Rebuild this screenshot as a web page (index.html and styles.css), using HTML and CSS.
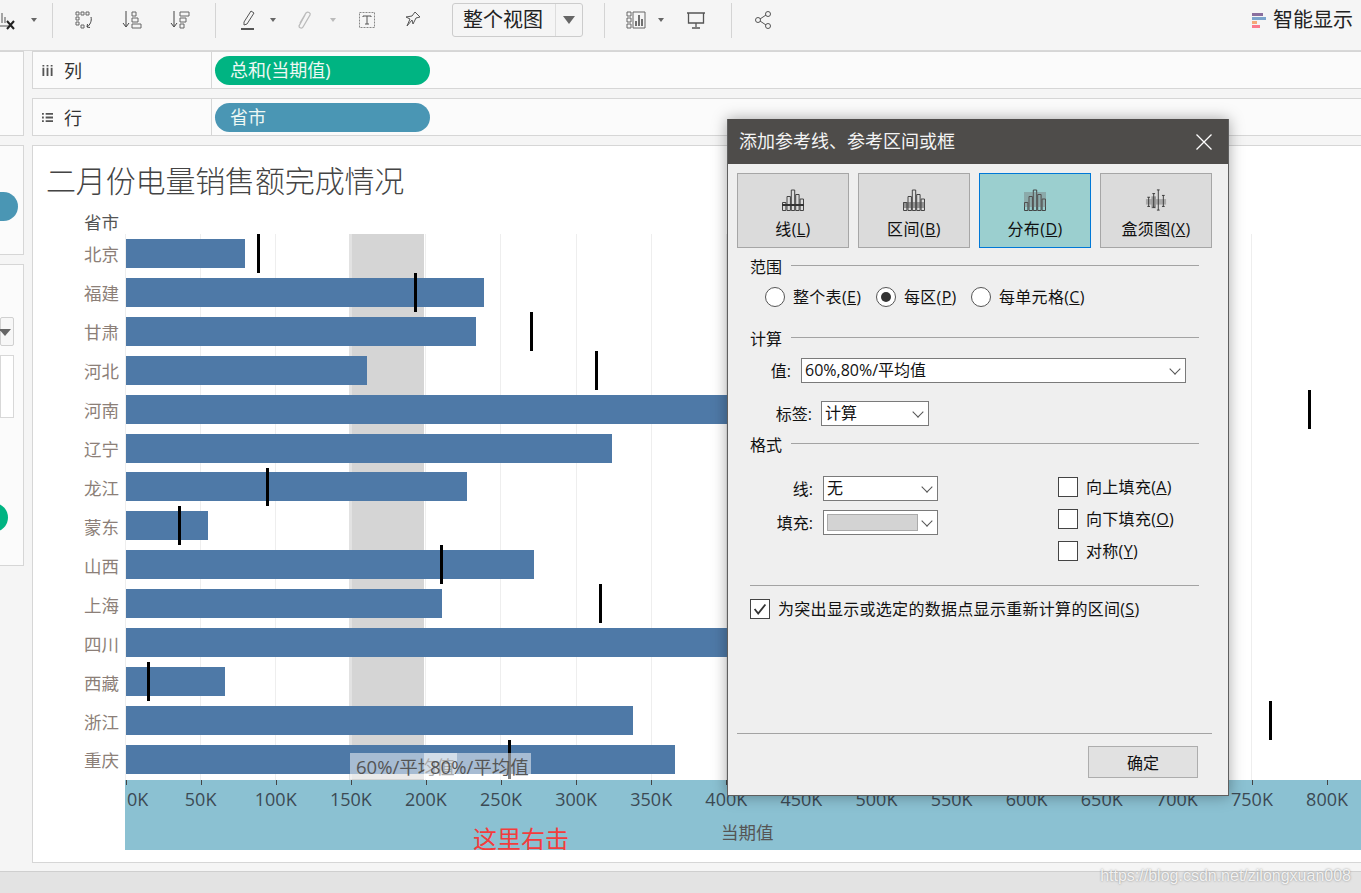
FILE: index.html
```html
<!DOCTYPE html>
<html lang="zh-CN">
<head>
  <meta charset="UTF-8" />
  <title>添加参考线、参考区间或框</title>
  <link rel="stylesheet" href="styles.css">
</head>
<body>
  <svg class="defs" width="0" height="0">
    <symbol id="bars" viewBox="0 0 22 22">
      <path d="M.5 13.5h3.4v8H.5zM5 7.500h3.400v14H5zM9.300 1h3.400v20.500H9.300zM13.700 5.500h3.400v16h-3.400zM18.100 10h3.400v11.500h-3.400z" fill="none" stroke="#444"/>
    </symbol>
  </svg>

  <div id="toolbar">
    <span class="tool t-first"><svg viewBox="0 0 20 20"><path d="M.5 0v16h13M3 13V9M6 13V3M9 13V7" fill="none" stroke="#555"/><path d="M11 11l7 8m0-8l-7 8" stroke="#222" stroke-width="2"/></svg></span>
    <span class="caret c-first"></span>
    <span class="sep"></span>
    <span class="tool t-wide t-swap"><svg viewBox="0 0 20 20"><path d="M2 2h3v3H2zM7 2h3v3H7zM12 2h3v3h-3zM2 7h3v3H2zM2 12h3v3H2zM7 15h3v3H7z" fill="none" stroke="#666"/><path d="M17 7c1 4-1 8-4 10m0 0l3 .5M13 17l.5-3" fill="none" stroke="#444"/></svg></span>
    <span class="tool t-wide"><svg viewBox="0 0 20 20"><path d="M4 1v15m-3-3l3 4 3-4" fill="none" stroke="#444"/><path d="M10 2h4v4h-4zM10 8h6v4h-6zM10 14h9v4h-9z" fill="none" stroke="#666"/></svg></span>
    <span class="tool t-wide"><svg viewBox="0 0 20 20"><path d="M4 1v15m-3-3l3 4 3-4" fill="none" stroke="#444"/><path d="M10 2h9v4h-9zM10 8h6v4h-6zM10 14h4v4h-4z" fill="none" stroke="#666"/></svg></span>
    <span class="sep s-second"></span>
    <span class="tool t-pen"><svg viewBox="0 0 20 20"><path d="M6 12L13 1l3 2-7 11-3 1z" fill="none" stroke="#555"/><path d="M3 19h13" stroke="#555" stroke-width="2"/></svg></span>
    <span class="caret"></span>
    <span class="tool t-clip"><svg viewBox="0 0 20 20"><path d="M6 13l6-10c2-2 5 0 4 2l-7 12c-1 2-4 1-4-1l6-11" fill="none" stroke="#bbb" stroke-width="1.300"/></svg></span>
    <span class="caret caret-off"></span>
    <span class="tool t-text"><svg viewBox="0 0 20 20"><path d="M2.500 2.500h15v15h-15z" fill="none" stroke="#888" stroke-dasharray="2 1"/><path d="M6 7V6h8v1M10 6v8M8 14h4" fill="none" stroke="#555"/></svg></span>
    <span class="tool t-pin"><svg viewBox="0 0 20 20"><path d="M12 2l5 5-4 1-3 6-1-4-5 6 3-7-4-2 6-1z" fill="none" stroke="#555"/></svg></span>
    <div class="fit-select">
      <span class="fit-text">整个视图</span>
      <span class="fit-arrow"></span>
    </div>
    <span class="sep s-third"></span>
    <span class="tool t-show"><svg viewBox="0 0 20 20"><path d="M1 2h4v4H1zM1 8h4v4H1zM1 14h4v4H1zM7 2h12v16H7z" fill="none" stroke="#666"/><path d="M10 16v-5M13 16V5M16 16V9" stroke="#444" stroke-width="1.500"/></svg></span>
    <span class="caret"></span>
    <span class="tool t-board"><svg viewBox="0 0 20 20"><path d="M1 3h18M2.500 3v10h15V3M10 13v4M6 18h8" fill="none" stroke="#555" stroke-width="1.300"/></svg></span>
    <span class="sep s-fourth"></span>
    <span class="tool t-share"><svg viewBox="0 0 20 20"><circle cx="15" cy="4" r="2.500" fill="none" stroke="#555"/><circle cx="5" cy="10" r="2.500" fill="none" stroke="#555"/><circle cx="15" cy="16" r="2.500" fill="none" stroke="#555"/><path d="M7 9l6-4M7 11l6 4" stroke="#555"/></svg></span>
    <div class="show-me">
      <span class="show-icon"><i class="s1"></i><i class="s2"></i><i class="s3"></i><i class="s4"></i></span>
      <span>智能显示</span>
    </div>
  </div>

  <div id="workspace">
    <div id="side">
      <div class="side-panel p-top"></div>
      <div class="side-panel p-mid"><span class="side-pill blue"></span></div>
      <div class="side-panel p-low">
        <div class="side-drop"></div>
        <div class="side-box"></div>
        <span class="side-pill green"></span>
      </div>
    </div>

    <div id="main">
      <div class="shelf">
        <div class="shelf-name">
          <svg viewBox="0 0 12 12"><path d="M1.500 3v9M6 3v9M10.500 3v9M1.500 0v1.500M6 0v1.500M10.500 0v1.500" stroke="#555" stroke-width="2"/></svg>
          <span>列</span>
        </div>
        <div class="shelf-body"><span class="pill pill-green">总和(当期值)</span></div>
      </div>
      <div class="shelf">
        <div class="shelf-name">
          <svg viewBox="0 0 12 12"><path d="M0 2h2M4 2h8M0 6h2M4 6h8M0 10h2M4 10h8" stroke="#555" stroke-width="2"/></svg>
          <span>行</span>
        </div>
        <div class="shelf-body"><span class="pill pill-blue">省市</span></div>
      </div>

      <div id="chart">
        <h1 class="chart-title">二月份电量销售额完成情况</h1>
        <div class="field-name">省市</div>
        <div class="plot">
          <div class="grid-lines">
            <i></i><i></i><i></i><i></i><i></i><i></i><i></i><i></i>
            <i></i><i></i><i></i><i></i><i></i><i></i><i></i><i></i>
          </div>
          <div class="ref-band"></div>
          <div class="rows">
            <div class="row"><span class="row-label">北京</span><div class="track"><div class="bar" style="width:119px"></div><i class="mark" style="left:132px"></i></div></div>
            <div class="row"><span class="row-label">福建</span><div class="track"><div class="bar" style="width:358px"></div><i class="mark" style="left:289px"></i></div></div>
            <div class="row"><span class="row-label">甘肃</span><div class="track"><div class="bar" style="width:350px"></div><i class="mark" style="left:405px"></i></div></div>
            <div class="row"><span class="row-label">河北</span><div class="track"><div class="bar" style="width:241px"></div><i class="mark" style="left:470px"></i></div></div>
            <div class="row"><span class="row-label">河南</span><div class="track"><div class="bar" style="width:800px"></div><i class="mark" style="left:1183px"></i></div></div>
            <div class="row"><span class="row-label">辽宁</span><div class="track"><div class="bar" style="width:486px"></div></div></div>
            <div class="row"><span class="row-label">龙江</span><div class="track"><div class="bar" style="width:341px"></div><i class="mark" style="left:141px"></i></div></div>
            <div class="row"><span class="row-label">蒙东</span><div class="track"><div class="bar" style="width:82px"></div><i class="mark" style="left:53px"></i></div></div>
            <div class="row"><span class="row-label">山西</span><div class="track"><div class="bar" style="width:408px"></div><i class="mark" style="left:315px"></i></div></div>
            <div class="row"><span class="row-label">上海</span><div class="track"><div class="bar" style="width:316px"></div><i class="mark" style="left:474px"></i></div></div>
            <div class="row"><span class="row-label">四川</span><div class="track"><div class="bar" style="width:800px"></div></div></div>
            <div class="row"><span class="row-label">西藏</span><div class="track"><div class="bar" style="width:99px"></div><i class="mark" style="left:22px"></i></div></div>
            <div class="row"><span class="row-label">浙江</span><div class="track"><div class="bar" style="width:507px"></div><i class="mark" style="left:1144px"></i></div></div>
            <div class="row"><span class="row-label">重庆</span><div class="track"><div class="bar" style="width:549px"></div><i class="mark" style="left:383px"></i></div></div>
          </div>
          <div class="ref-label l-60">60%/平均值</div>
          <div class="ref-label l-80">80%/平均值</div>
        </div>
        <div class="axis">
          <div class="ticks">
            <span class="tick tick-zero">0K</span><span class="tick">50K</span><span class="tick">100K</span><span class="tick">150K</span>
            <span class="tick">200K</span><span class="tick">250K</span><span class="tick">300K</span><span class="tick">350K</span>
            <span class="tick">400K</span><span class="tick">450K</span><span class="tick">500K</span><span class="tick">550K</span>
            <span class="tick">600K</span><span class="tick">650K</span><span class="tick">700K</span><span class="tick">750K</span>
            <span class="tick">800K</span>
          </div>
          <div class="axis-name">当期值</div>
          <div class="axis-note">这里右击</div>
        </div>
      </div>
    </div>
  </div>

  <div id="statusbar"></div>

  <div id="dialog">
    <div class="dlg-title">
      <span>添加参考线、参考区间或框</span>
      <svg viewBox="0 0 16 16"><path d="M.5.500l15 15m0-15l-15 15" stroke="#fff" stroke-width="1.300"/></svg>
    </div>
    <div class="dlg-tabs">
      <div class="dlg-tab">
        <span class="tab-icon"><svg><use href="#bars"/></svg><i class="tab-line"></i></span>
        <span>线(<u>L</u>)</span>
      </div>
      <div class="dlg-tab">
        <span class="tab-icon"><svg><use href="#bars"/></svg><i class="tab-zone"></i></span>
        <span>区间(<u>B</u>)</span>
      </div>
      <div class="dlg-tab active">
        <span class="tab-icon"><svg><use href="#bars"/></svg><i class="tab-dist"></i></span>
        <span>分布(<u>D</u>)</span>
      </div>
      <div class="dlg-tab">
        <span class="tab-icon"><svg viewBox="0 0 24 22"><path d="M1 10h22v6H1z" fill="#aaa"/><path d="M7 7h5v13H7z" fill="#999"/><path d="M4 8v10M2.500 8h3M2.500 18h3M9.500 4v15M8 4h3M8 19h3M14.500 0v22M13 0h3M13 22h3M20 6v12M18.500 6h3M18.500 18h3" stroke="#333" fill="none"/></svg></span>
        <span>盒须图(<u>X</u>)</span>
      </div>
    </div>

    <div class="dlg-body">
      <div class="group-head">范围</div>
      <div class="scope-row">
        <label class="opt"><span class="radio"></span>整个表(<u>E</u>)</label>
        <label class="opt"><span class="radio on"></span>每区(<u>P</u>)</label>
        <label class="opt"><span class="radio"></span>每单元格(<u>C</u>)</label>
      </div>

      <div class="group-head calc">计算</div>
      <div class="field value-field">
        <span class="field-label">值:</span>
        <div class="combo">60%,80%/平均值</div>
      </div>
      <div class="field tag-field">
        <span class="field-label">标签:</span>
        <div class="combo">计算</div>
      </div>

      <div class="group-head fmt">格式</div>
      <div class="format-grid">
        <div class="format-left">
          <div class="field">
            <span class="field-label">线:</span>
            <div class="combo">无</div>
          </div>
          <div class="field">
            <span class="field-label">填充:</span>
            <div class="combo"><span class="swatch"></span></div>
          </div>
        </div>
        <div class="format-right">
          <label class="opt"><span class="check"></span>向上填充(<u>A</u>)</label>
          <label class="opt"><span class="check"></span>向下填充(<u>O</u>)</label>
          <label class="opt"><span class="check"></span>对称(<u>Y</u>)</label>
        </div>
      </div>

      <div class="rule"></div>
      <label class="opt highlight-opt">
        <span class="check"><svg viewBox="0 0 20 20"><path d="M4 10l4 5 8-10" fill="none" stroke="#333" stroke-width="2"/></svg></span>
        为突出显示或选定的数据点显示重新计算的区间(<u>S</u>)
      </label>
    </div>

    <div class="dlg-foot">
      <button class="ok-btn">确定</button>
    </div>
  </div>

  <div id="watermark">https://blog.csdn.net/zilongxuan008</div>
</body>
</html>
```

FILE: styles.css
```css
* {
  box-sizing: border-box;
  margin: 0;
  padding: 0;
}
body {
  font-family: "Open Sans", "Noto Sans CJK SC", sans-serif;
  background: #f5f5f5;
  color: #333;
  width: 1361px;
  height: 893px;
  overflow: hidden;
  position: relative;
}
.defs {
  position: absolute;
}

/* toolbar */
#toolbar {
  display: flex;
  align-items: center;
  height: 51px;
  padding-bottom: 10px;
  border-bottom: 1px solid #d8d8d8;
}
.tool {
  flex: none;
  width: 36px;
  display: flex;
  justify-content: center;
}
.tool svg {
  flex: none;
  width: 20px;
  height: 20px;
}
.t-first {
  width: 16px;
  justify-content: flex-end;
}
.t-wide { width: 48px; }
.t-swap { margin-left: 7px; }
.t-pen { margin-left: 14px; }
.t-clip { margin-left: 6px; }
.t-text { margin-left: 9px; }
.t-pin { margin-left: 10px; }
.t-show { margin-left: 13px; }
.t-board { margin-left: 10px; }
.t-share { margin-left: 13px; }
.caret {
  flex: none;
  width: 14px;
  height: 4px;
  position: relative;
}
.caret::before {
  content: '';
  position: absolute;
  left: 4px;
  top: 0;
  border-left: 3px solid transparent;
  border-right: 3px solid transparent;
  border-top: 4px solid #666;
}
.caret-off { margin-left: 4px; }
.caret-off::before { border-top-color: #bbb; }
.c-first { width: 36px; }
.c-first::before { left: 15px; }
.sep {
  flex: none;
  width: 1px;
  height: 35px;
  background: #d4d4d4;
}
.s-second { margin-left: 11px; }
.s-third { margin-left: 21px; }
.s-fourth { margin-left: 17px; }
.fit-select {
  flex: none;
  display: flex;
  align-items: center;
  width: 131px;
  height: 34px;
  margin-left: 21px;
  border: 1px solid #ccc;
  border-radius: 3px;
}
.fit-text {
  width: 103px;
  height: 32px;
  padding-left: 10px;
  border-right: 1px solid #ddd;
  font-size: 20px;
  line-height: 32px;
  color: #222;
}
.fit-arrow {
  margin-left: 7px;
  border-left: 6px solid transparent;
  border-right: 6px solid transparent;
  border-top: 8px solid #666;
}
.show-me {
  margin-left: auto;
  padding-right: 8px;
  display: flex;
  align-items: center;
  gap: 7px;
  font-size: 20px;
  line-height: 28px;
  color: #222;
}
.show-icon {
  display: flex;
  flex-direction: column;
  gap: 1px;
  width: 14px;
}
.show-icon i {
  display: block;
  height: 3px;
}
.s1 { width: 11px; background: #8a6f9e; }
.s2 { width: 14px; background: #7ba4cc; }
.s3 { width: 5px; background: #f4a978; }
.s4 { width: 8px; background: #fb7a8c; }

/* workspace */
#workspace {
  display: flex;
  gap: 8px;
  height: 820px;
}
#side {
  flex: none;
  width: 24px;
  display: flex;
  flex-direction: column;
  gap: 9px;
}
.side-panel {
  position: relative;
  background: #fbfbfb;
  border: 1px solid #d6d6d6;
  border-left: 0;
}
.p-top { height: 85px; }
.p-mid { height: 110px; }
.p-low { height: 302px; }
.side-pill {
  position: absolute;
  width: 40px;
  height: 29px;
  border-radius: 15px;
}
.side-pill.blue {
  right: 5px;
  top: 46px;
  background: #4a96b4;
}
.side-pill.green {
  right: 15px;
  top: 238px;
  background: #00b482;
}
.side-drop {
  position: absolute;
  left: 0;
  top: 52px;
  width: 14px;
  height: 29px;
  border: 1px solid #d0d0d0;
  border-radius: 2px;
  background: #f7f7f7;
}
.side-drop::after {
  content: '';
  position: absolute;
  left: -2px;
  top: 11px;
  border-left: 6px solid transparent;
  border-right: 6px solid transparent;
  border-top: 7px solid #666;
}
.side-box {
  position: absolute;
  left: 0;
  top: 90px;
  width: 14px;
  height: 63px;
  border: 1px solid #d8d8d8;
  background: #fff;
}
#main {
  flex: 1;
  min-width: 0;
  display: flex;
  flex-direction: column;
  gap: 9px;
}
.shelf {
  flex: none;
  display: flex;
  height: 38px;
  background: #fbfbfb;
  border: 1px solid #d6d6d6;
  border-right: 0;
}
.shelf-name {
  width: 179px;
  display: flex;
  align-items: center;
  gap: 11px;
  padding-left: 9px;
  border-right: 1px solid #d6d6d6;
  font-size: 18px;
  color: #333;
}
.shelf-name svg {
  width: 11px;
  height: 11px;
}
.shelf-body {
  padding: 4px 3px;
}
.pill {
  display: block;
  width: 215px;
  height: 29px;
  padding-left: 15px;
  border-radius: 15px;
  font-size: 18px;
  line-height: 29px;
  color: #eef8f4;
}
.pill-green { background: #00b482; }
.pill-blue { background: #4a96b4; }

/* chart */
#chart {
  flex: none;
  height: 718px;
  background: #fff;
  border: 1px solid #d6d6d6;
  border-right: 0;
  overflow: hidden;
}
.chart-title {
  margin: 17px 0 0 13px;
  font-size: 30px;
  font-weight: 300;
  letter-spacing: -0.15px;
  line-height: 36px;
  color: #444;
}
.field-name {
  width: 86px;
  margin-top: 11px;
  height: 24px;
  text-align: right;
  font-size: 17.5px;
  line-height: 24px;
  color: #555;
}
.plot {
  position: relative;
  height: 546px;
}
.grid-lines {
  position: absolute;
  left: 92px;
  top: 0;
  bottom: 0;
  display: flex;
}
.grid-lines i {
  flex: none;
  width: 75.1px;
  border-left: 1px solid #eeeeee;
}
.ref-band {
  position: absolute;
  left: 316px;
  top: 0;
  bottom: 0;
  width: 75px;
  background: #d5d5d5;
  border-left: 3px solid #e2e2e2;
}
.rows {
  position: relative;
  display: flex;
  flex-direction: column;
  height: 545px;
}
.row {
  flex: 1;
  display: flex;
  align-items: center;
}
.row-label {
  flex: none;
  width: 86px;
  padding-top: 2px;
  text-align: right;
  font-size: 17.5px;
  line-height: 24px;
  color: #8c7f78;
}
.track {
  flex: 1;
  position: relative;
  align-self: stretch;
  margin-left: 7px;
  display: flex;
  align-items: center;
}
.bar {
  height: 29px;
  background: #4e79a7;
}
.mark {
  position: absolute;
  top: 0;
  bottom: 0;
  width: 3px;
  margin-left: -1px;
  background: #000;
}
.ref-label {
  position: absolute;
  top: 519px;
  width: 107px;
  height: 26px;
  padding-left: 6px;
  background: rgba(255, 255, 255, 0.5);
  font-size: 18.5px;
  line-height: 28px;
  color: #555;
  white-space: nowrap;
}
.l-60 { left: 317px; }
.l-80 { left: 391px; }
.axis {
  position: relative;
  height: 70px;
  margin-left: 92px;
  background: #8bc1d2;
  overflow: hidden;
}
.ticks {
  display: flex;
  margin-left: -37px;
}
.tick {
  flex: none;
  position: relative;
  width: 75.1px;
  padding-top: 7px;
  text-align: center;
  font-size: 18px;
  line-height: 24px;
  color: #3c4a54;
}
.tick::before {
  content: '';
  position: absolute;
  left: 50%;
  top: 0;
  width: 1px;
  height: 5px;
  background: #444;
}
.tick-zero {
  padding-left: 39px;
  text-align: left;
}
.tick-zero::before { left: 38px; }
.axis-name {
  position: absolute;
  left: 596px;
  top: 40px;
  font-size: 17.5px;
  line-height: 24px;
  color: #555;
}
.axis-note {
  position: absolute;
  left: 348px;
  top: 42px;
  font-size: 24px;
  line-height: 34px;
  color: #f33c3c;
}
#statusbar {
  position: absolute;
  left: 0;
  right: 0;
  bottom: 0;
  height: 22px;
  background: #e3e3e3;
  border-top: 1px solid #cfcfcf;
}
#watermark {
  position: absolute;
  right: 10px;
  top: 864px;
  font-family: "Liberation Sans", sans-serif;
  font-size: 16px;
  line-height: 24px;
  color: rgba(255, 255, 255, 0.85);
  text-shadow: 0 0 2px rgba(90, 90, 90, 0.7);
}

/* dialog */
#dialog {
  position: absolute;
  left: 727px;
  top: 119px;
  width: 502px;
  height: 677px;
  display: flex;
  flex-direction: column;
  background: #efefef;
  border: 1px solid #5f5f5f;
  border-top: 0;
  box-shadow: 0 0 14px rgba(0, 0, 0, 0.35);
  font-size: 16px;
  color: #111;
}
.dlg-title {
  flex: none;
  height: 45px;
  display: flex;
  align-items: center;
  justify-content: space-between;
  padding: 0 16px 3px 11px;
  background: #4e4c4a;
  font-size: 18px;
  color: #f4f4f4;
}
.dlg-title svg {
  width: 16px;
  height: 16px;
  margin-top: 3px;
}
.dlg-tabs {
  flex: none;
  display: flex;
  gap: 9px;
  margin-top: 9px;
  padding-left: 9px;
}
.dlg-tab {
  width: 112px;
  height: 75px;
  padding-top: 15px;
  display: flex;
  flex-direction: column;
  align-items: center;
  gap: 6px;
  background: #dbdbdb;
  border: 1px solid #a6a6a6;
  line-height: 24px;
  letter-spacing: 0.4px;
}
.dlg-tab.active {
  background: #9bcfcf;
  border-color: #0078d7;
}
.tab-icon {
  position: relative;
  display: block;
  width: 22px;
  height: 22px;
}
.tab-icon svg {
  display: block;
  width: 22px;
  height: 22px;
}
.tab-icon i {
  position: absolute;
  left: 0;
  right: 0;
}
.tab-line { top: 15px; height: 2px; background: #333; }
.tab-zone { top: 13px; height: 6px; background: rgba(80, 80, 80, 0.5); }
.tab-dist { top: 3px; height: 15px; background: rgba(110, 100, 100, 0.35); }
.dlg-body {
  flex: 1;
  padding: 9px 29px 0 22px;
}
.group-head {
  display: flex;
  align-items: center;
  gap: 9px;
  height: 20px;
  line-height: 20px;
}
.group-head::after {
  content: '';
  flex: 1;
  height: 1px;
  margin-top: -3px;
  background: #a3a3a3;
}
.scope-row {
  display: grid;
  grid-template-columns: 111px 95px auto;
  margin-top: 8px;
  padding-left: 15px;
}
.opt {
  display: flex;
  align-items: center;
  height: 24px;
  line-height: 24px;
  white-space: nowrap;
  letter-spacing: 0.3px;
}
.radio {
  flex: none;
  position: relative;
  width: 20px;
  height: 20px;
  margin-right: 8px;
  background: #fff;
  border: 1px solid #555;
  border-radius: 50%;
}
.radio.on::after {
  content: '';
  position: absolute;
  left: 4px;
  top: 4px;
  width: 10px;
  height: 10px;
  border-radius: 50%;
  background: #333;
}
.calc { margin-top: 20px; }
.fmt { margin-top: 9px; }
.field {
  display: flex;
  align-items: center;
  gap: 10px;
}
.field-label {
  text-align: right;
  line-height: 24px;
}
.combo {
  position: relative;
  height: 25px;
  padding-left: 3px;
  background: #fff;
  border: 1px solid #7a7a7a;
  line-height: 23px;
}
.combo::after {
  content: '';
  position: absolute;
  right: 6px;
  top: 6px;
  width: 7px;
  height: 7px;
  border-right: 1px solid #555;
  border-bottom: 1px solid #555;
  transform: rotate(45deg);
}
.value-field { margin-top: 9px; }
.value-field .field-label { width: 41px; }
.value-field .combo { width: 385px; }
.tag-field {
  margin-top: 18px;
  gap: 9px;
}
.tag-field .field-label { width: 62px; }
.tag-field .combo { width: 108px; }
.format-grid {
  display: flex;
  margin-top: 21px;
}
.format-left {
  flex: none;
  width: 308px;
  display: flex;
  flex-direction: column;
  gap: 9px;
}
.format-left .field-label { width: 63px; }
.format-left .combo { width: 115px; }
.swatch {
  display: block;
  width: 91px;
  height: 17px;
  margin-top: 3px;
  background: #d3d3d3;
  border: 1px solid #aaa;
}
.format-right {
  display: flex;
  flex-direction: column;
  gap: 8px;
  margin-top: -1px;
}
.check {
  flex: none;
  width: 20px;
  height: 20px;
  margin-right: 8px;
  background: #fff;
  border: 1px solid #444;
}
.check svg {
  display: block;
  width: 18px;
  height: 18px;
}
.rule {
  height: 1px;
  margin-top: 22px;
  background: #a3a3a3;
}
.highlight-opt { margin-top: 11px; }
.dlg-foot {
  flex: none;
  height: 62px;
  margin: 0 16px 0 9px;
  padding: 12px 14px 0 0;
  display: flex;
  justify-content: flex-end;
  border-top: 1px solid #a3a3a3;
}
.ok-btn {
  width: 110px;
  height: 32px;
  background: #e1e1e1;
  border: 1px solid #adadad;
  font-family: inherit;
  font-size: 16px;
  color: #111;
}
```
